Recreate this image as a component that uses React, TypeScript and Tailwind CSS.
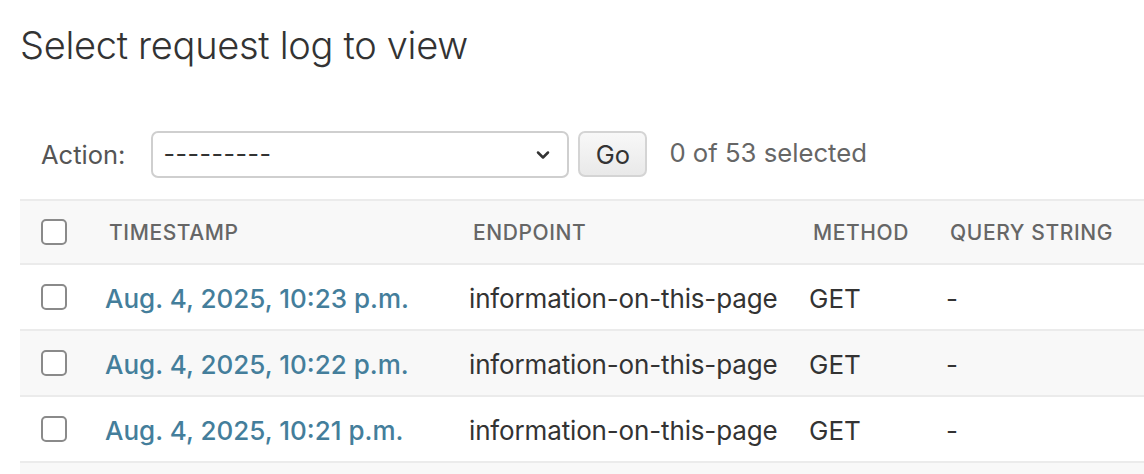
import { ChevronDown } from "lucide-react";

const rows = [
  { ts: "Aug. 4, 2025, 10:23 p.m.", endpoint: "information-on-this-page", method: "GET", qs: "-" },
  { ts: "Aug. 4, 2025, 10:22 p.m.", endpoint: "information-on-this-page", method: "GET", qs: "-" },
  { ts: "Aug. 4, 2025, 10:21 p.m.", endpoint: "information-on-this-page", method: "GET", qs: "-" },
];

const cols = "grid grid-cols-[69px_364px_340px_137px_1fr] items-center";

function Checkbox() {
  return (
    <span className="block w-[26px] h-[26px] rounded-[5px] border-2 border-[#8a8a8a] bg-white" />
  );
}

export default function App() {
  return (
    <div className="w-[1144px] h-[474px] overflow-hidden bg-white font-['Inter','Liberation_Sans',sans-serif] text-[#333]">
      <h1 className="pl-[20px] pt-[21px] text-[38px] leading-[48px] font-light tracking-[-0.3px] text-[#333]">
        Select request log to view
      </h1>

      <div className="flex items-center mt-[61px] pl-[41px] h-[48px]">
        <label className="pt-[3px] text-[25.5px] text-[#555] mr-[26px]">Action:</label>
        <div className="flex items-center justify-between w-[418px] h-[47px] rounded-[7px] border-2 border-[#cfcfcf] bg-white pl-[10px] pr-[14px]">
          <span className="pt-[2px] text-[25px] text-[#333] tracking-[0.5px]">---------</span>
          <ChevronDown className="w-[20px] h-[20px] mt-[2px] text-[#333]" strokeWidth={3} />
        </div>
        <button className="ml-[9px] w-[69px] h-[46px] pt-[2px] rounded-[7px] border-2 border-[#d4d4d4] bg-gradient-to-b from-[#f8f8f8] to-[#e9e9e9] text-[25.5px] text-[#333]">
          Go
        </button>
        <span className="ml-[22px] text-[25.7px] text-[#666] -mt-[2px]">0 of 53 selected</span>
      </div>

      <div className="ml-[20px] mt-[21px]">
        <div className={`${cols} h-[66px] bg-[#f8f8f8] border-y-2 border-[#ebebeb]`}>
          <div className="pl-[21px]">
            <Checkbox />
          </div>
          <div className="pl-[20px] pt-[2px] text-[21px] font-medium text-[#666] tracking-[0.6px]">TIMESTAMP</div>
          <div className="pl-[20px] pt-[2px] text-[21px] font-medium text-[#666] tracking-[0.6px]">ENDPOINT</div>
          <div className="pl-[20px] pt-[2px] text-[21px] font-medium text-[#666] tracking-[0.6px]">METHOD</div>
          <div className="pl-[20px] pt-[2px] text-[21px] font-medium text-[#666] tracking-[0.6px]">QUERY STRING</div>
        </div>
        {rows.map((r, i) => (
          <div
            key={i}
            className={`${cols} h-[66px] border-b-2 border-[#ebebeb] ${i % 2 === 1 ? "bg-[#f8f8f8]" : "bg-white"}`}
          >
            <div className="pl-[21px]">
              <Checkbox />
            </div>
            <div className="pl-[16px] pt-[3px] text-[26px] font-medium text-[#447e9b]">{r.ts}</div>
            <div className="pl-[16px] pt-[3px] text-[26px] tracking-[-0.15px] text-[#333]">{r.endpoint}</div>
            <div className="pl-[16px] pt-[3px] text-[26px] text-[#333]">{r.method}</div>
            <div className="pl-[16px] pt-[3px] text-[26px] text-[#333]">{r.qs}</div>
          </div>
        ))}
        <div className="h-[20px] bg-[#f8f8f8]" />
      </div>
    </div>
  );
}
